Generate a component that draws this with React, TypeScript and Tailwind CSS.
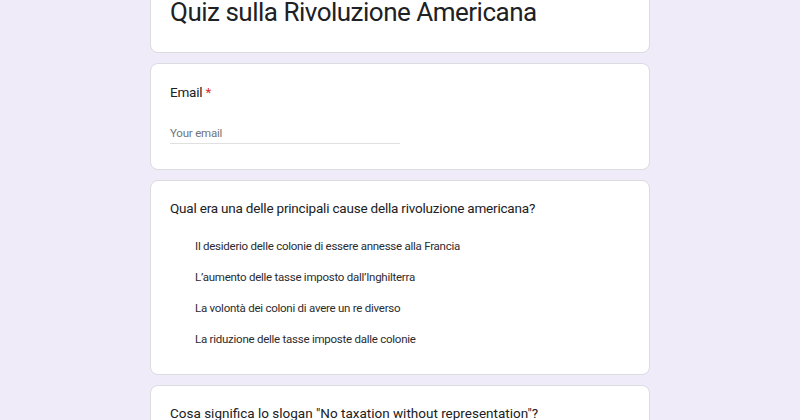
import React from 'react';

const options = [
    'Il desiderio delle colonie di essere annesse alla Francia',
    'L’aumento delle tasse imposto dall’Inghilterra',
    'La volontà dei coloni di avere un re diverso',
    'La riduzione delle tasse imposte dalle colonie',
];

const Card: React.FC<{ className?: string; children: React.ReactNode }> = ({ className = '', children }) => (
    <div className={`rounded-lg border border-[#dadce0] bg-white ${className}`}>{children}</div>
);

const App: React.FC = () => {
    return (
        <div className="h-[420px] w-[800px] overflow-hidden bg-[#efebf8] font-['Roboto',sans-serif] text-[#202124]">
            <div className="mx-auto -mt-[20px] flex w-[500px] flex-col gap-[10px]">
                {/* Title */}
                <Card className="h-[73px] px-[19px] pt-[13px]">
                    <h1 className="text-[26px] leading-[36px] tracking-[-0.5px]">Quiz sulla Rivoluzione Americana</h1>
                </Card>

                {/* Email */}
                <Card className="h-[107px] px-[19px] pt-[19px]">
                    <p className="text-[13.5px] leading-[18px] tracking-[-0.2px]">
                        Email <span className="text-[#d93025]">*</span>
                    </p>
                    <div className="mt-[25px] w-[230px] border-b border-[#e0e0e0] pb-[3px] text-[11.5px] leading-[14px] tracking-[-0.2px] text-[#70757a]">
                        Your email
                    </div>
                </Card>

                {/* Question 1 */}
                <Card className="h-[195px] px-[19px] pt-[18px]">
                    <p className="text-[13.5px] leading-[18px] tracking-[-0.2px]">Qual era una delle principali cause della rivoluzione americana?</p>
                    <div className="mt-[21px] flex flex-col gap-[15px] pl-[25px]">
                        {options.map((o) => (
                            <p key={o} className="text-[11.5px] leading-[16px] tracking-[-0.25px] text-[#2b2c2f]">{o}</p>
                        ))}
                    </div>
                </Card>

                {/* Question 2 */}
                <Card className="h-[120px] px-[19px] pt-[18px]">
                    <p className="text-[13.5px] leading-[18px]">Cosa significa lo slogan "No taxation without representation"?</p>
                </Card>
            </div>
        </div>
    );
};

export default App;
